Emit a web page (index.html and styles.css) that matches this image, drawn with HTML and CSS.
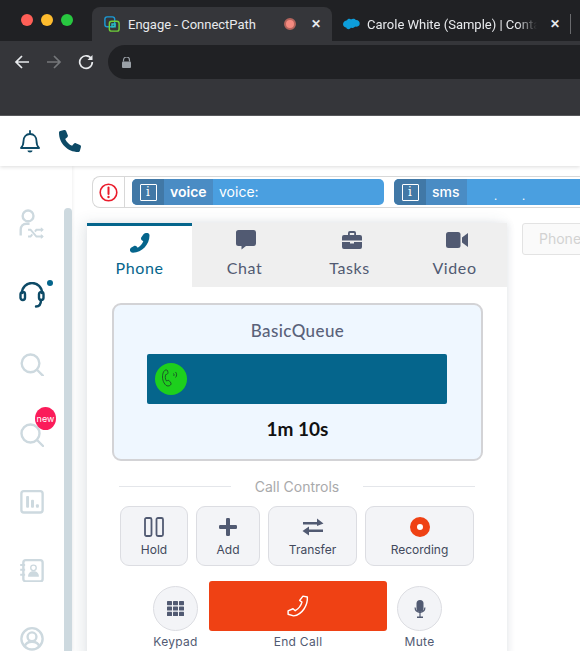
FILE: index.html
```html
<!DOCTYPE html>
<html lang="en">
<head>
    <meta charset="UTF-8">
    <meta name="viewport" content="width=device-width, initial-scale=1.0">
    <title>Engage - ConnectPath</title>
    <link rel="stylesheet" href="styles.css">
</head>
<body>
    <div class="chrome">
        <div class="tabstrip">
            <div class="lights">
                <span class="light red"></span>
                <span class="light yellow"></span>
                <span class="light green"></span>
            </div>
            <div class="tab active">
                <svg class="favicon" width="16" height="16" viewBox="0 0 18 18" fill="none" stroke-width="1.6">
                    <rect x="1" y="1" width="11" height="11" rx="2.5" stroke="#1b9ad6"/>
                    <rect x="6" y="6" width="11" height="11" rx="2.5" stroke="#6fd03a"/>
                    <path d="M9 13V9h3.500v3H9" stroke="#2cc0c0"/>
                </svg>
                <span class="tab-title">Engage - ConnectPath</span>
                <span class="audio-dot"></span>
                <span class="tab-close">&#10005;</span>
            </div>
            <div class="tab other">
                <svg class="favicon" width="17" height="12" viewBox="0 0 17 12">
                    <path d="M4 2.200C5 .6 7 .4 8 1.600 9.200 .2 12 .4 12.800 2 15.300 1.800 17 3.800 16.700 6 16.400 8.200 14 9.200 12.200 8.600 11 10.200 9 10.200 8 9.400 6.800 11.800 3.800 11.600 3.200 9.400 1.200 9.600 0 7.800 0 6 0 4.200 2 2.600 4 2.200Z" fill="#0d9dda"/>
                </svg>
                <span class="tab-title fade">Carole White (Sample) | Conta</span>
                <span class="tab-close">&#10005;</span>
            </div>
            <span class="tab-sep"></span>
        </div>
        <div class="toolbar">
            <svg width="16" height="16" viewBox="0 0 16 16" fill="none" stroke="#e8eaed" stroke-width="1.700">
                <path d="M15 8H2M8 2 2 8l6 6"/>
            </svg>
            <svg width="16" height="16" viewBox="0 0 16 16" fill="none" stroke="#75777a" stroke-width="1.700">
                <path d="M1 8h13M8 2l6 6-6 6"/>
            </svg>
            <svg width="16" height="16" viewBox="0 0 16 16" fill="none" stroke="#e8eaed" stroke-width="1.700">
                <path d="M13.500 5A6.300 6.300 0 1 0 14.300 8"/>
                <path d="M14.500 1v5h-5z" fill="#e8eaed" stroke="none"/>
            </svg>
            <div class="omnibox">
                <svg width="9" height="11" viewBox="0 0 9 11">
                    <path d="M1.500 4.500V3a3 3 0 0 1 6 0v1.500" fill="none" stroke="#9aa0a6" stroke-width="1.200"/>
                    <rect y="4.500" width="9" height="6.500" rx="1" fill="#9aa0a6"/>
                </svg>
            </div>
        </div>
    </div>

    <header class="topbar">
        <svg width="20" height="23" viewBox="0 0 20 23" fill="none" stroke="#0d4a66" stroke-width="1.800">
            <path d="M1 18c2-2 2.500-3.500 2.500-7 0-4 2.500-7 6.500-7s6.500 3 6.500 7c0 3.500.5 5 2.500 7z" stroke-linejoin="round"/>
            <path d="M10 1v3" stroke-linecap="round"/>
            <path d="M7.500 20.500h5c0 1.200-1 2-2.500 2s-2.500-.8-2.500-2z" fill="#0d4a66" stroke="none"/>
        </svg>
        <svg width="22" height="22" viewBox="0 0 512 512">
            <path d="M164.900 24.600c-7.700-18.600-28-28.500-47.400-23.200l-88 24C12.100 30.200 0 46 0 64c0 247.400 200.600 448 448 448 18 0 33.800-12.100 38.600-29.500l24-88c5.300-19.400-4.600-39.700-23.200-47.400l-96-40c-16.300-6.800-35.200-2.100-46.300 11.600L304.700 368c-70.400-33.300-127.400-90.300-160.700-160.700l49.300-40.300c13.700-11.200 18.400-30 11.600-46.300l-40-96z" fill="#0d4a66"/>
        </svg>
    </header>

    <div class="app">
        <nav class="rail">
            <div class="rail-icons">
                <svg class="rail-person" width="26" height="32" viewBox="0 0 26 32" fill="none" stroke="#cdd9df" stroke-width="2.400">
                    <circle cx="9" cy="7" r="5.500"/>
                    <path d="M1.500 27v-6c0-4 2.500-6 6-6h3"/>
                    <path d="M9 21h2.500l6 7H24M9 28h2.500l1.800-2.200M16 23l1.500-2H24" stroke-width="2"/>
                    <path d="M22 18.500l3 2.500-3 2.500zM22 25.500l3 2.500-3 2.500z" fill="#cdd9df" stroke="none"/>
                </svg>
                <div class="rail-slot">
                    <svg width="26" height="26" viewBox="0 0 26 26" fill="none" stroke="#0d4a66" stroke-width="2.400">
                        <path d="M3 11a10 10 0 0 1 20 0" stroke-linecap="round"/>
                        <rect x="1.500" y="10" width="4.500" height="8" rx="2.200"/>
                        <rect x="20" y="10" width="4.500" height="8" rx="2.200"/>
                        <path d="M22 18c0 4-1.500 6.500-5 6.500" stroke-linecap="round"/>
                    </svg>
                    <span class="online-dot"></span>
                </div>
                <svg width="24" height="24" viewBox="0 0 24 24" fill="none" stroke="#cdd9df" stroke-width="2.400">
                    <circle cx="10.500" cy="10.500" r="9"/>
                    <path d="M17 17l6 6" stroke-linecap="round"/>
                </svg>
                <div class="rail-slot rail-new">
                    <svg width="24" height="24" viewBox="0 0 24 24" fill="none" stroke="#cdd9df" stroke-width="2.400">
                        <circle cx="10.500" cy="10.500" r="9"/>
                        <path d="M17 17l6 6" stroke-linecap="round"/>
                    </svg>
                    <span class="new-badge">new</span>
                </div>
                <svg width="24" height="24" viewBox="0 0 24 24" fill="none">
                    <rect x="1.200" y="1.200" width="21.600" height="21.600" rx="2.500" stroke="#cdd9df" stroke-width="2.400"/>
                    <rect x="6" y="6" width="3" height="12" rx="1" fill="#cdd9df"/>
                    <rect x="11" y="10" width="3" height="8" rx="1" fill="#cdd9df"/>
                    <rect x="16" y="14.500" width="3" height="3.500" rx="1" fill="#cdd9df"/>
                </svg>
                <svg width="24" height="24" viewBox="0 0 24 24" fill="none">
                    <rect x="3.200" y="1.200" width="19.600" height="21.600" rx="2.500" stroke="#cdd9df" stroke-width="2.400"/>
                    <path d="M0 6h5M0 11h5M0 16h5" stroke="#cdd9df" stroke-width="2"/>
                    <circle cx="13.500" cy="9" r="2.800" stroke="#cdd9df" stroke-width="1.400"/>
                    <path d="M8 18c0-3.500 2-5.500 5.500-5.500S19 14.500 19 18z" fill="#cdd9df"/>
                </svg>
                <svg width="24" height="24" viewBox="0 0 24 24" fill="none" stroke="#cdd9df" stroke-width="2.400">
                    <circle cx="12" cy="12" r="10.800"/>
                    <circle cx="12" cy="10" r="4.500"/>
                    <path d="M4.500 20c1-3.500 4-5 7.500-5s6.500 1.500 7.500 5"/>
                </svg>
            </div>
            <span class="rail-scroll"></span>
        </nav>

        <main class="content">
            <div class="alerts">
                <div class="alert-icon">
                    <svg width="19" height="19" viewBox="0 0 19 19" fill="none">
                        <circle cx="9.500" cy="9.500" r="8.300" stroke="#ea1c2c" stroke-width="1.600"/>
                        <path d="M9.500 4.500v6.500" stroke="#ea1c2c" stroke-width="2" stroke-linecap="round"/>
                        <circle cx="9.500" cy="14" r="1.200" fill="#ea1c2c"/>
                    </svg>
                </div>
                <div class="queue-pill voice-pill">
                    <span class="pill-info"><span class="info-box">i</span></span>
                    <span class="pill-name">voice</span>
                    <span class="pill-text">voice:</span>
                </div>
                <div class="queue-pill sms-pill">
                    <span class="pill-info"><span class="info-box">i</span></span>
                    <span class="pill-name">sms</span>
                    <span class="pill-dots">.&nbsp;&nbsp;&nbsp;&nbsp;&nbsp;&nbsp;&nbsp;&nbsp;.</span>
                </div>
            </div>

            <div class="workspace">
                <section class="softphone">
                    <div class="channel-tabs">
                        <div class="channel selected">
                            <svg width="20" height="20" viewBox="0 0 20 20">
                                <path d="M17.500 0c1 .1 2 1 2 2.500C19.500 11.500 12 19.500 3 19.800c-1.500 0-2.500-.8-3-2-.3-1.200 0-2.200 1-3l3-1.800c1-.5 2-.3 2.700.5l1 1.300c2.500-1.300 4.500-3.800 5.600-6.500l-1.500-1c-.8-.7-1-1.700-.6-2.700L13.500 1.200C14.200.2 15.500-.2 17.500 0Z" fill="#05658c"/>
                            </svg>
                            <span>Phone</span>
                        </div>
                        <div class="channel icon-chat">
                            <svg width="20" height="20" viewBox="0 0 20 20">
                                <path d="M2.500 0h15A2.500 2.500 0 0 1 20 2.500v11a2.500 2.500 0 0 1-2.500 2.500H10l-4.500 3.500V16h-3A2.500 2.500 0 0 1 0 13.500v-11A2.500 2.500 0 0 1 2.500 0Z" fill="#515a72"/>
                            </svg>
                            <span>Chat</span>
                        </div>
                        <div class="channel icon-tasks">
                            <svg width="20" height="18" viewBox="0 0 20 18">
                                <path d="M6 4V2a2 2 0 0 1 2-2h4a2 2 0 0 1 2 2v2h-1.800V2H7.800v2z M2 4h16a2 2 0 0 1 2 2v3.500H0V6a2 2 0 0 1 2-2Z M0 11h8v1.500h4V11h8v5a2 2 0 0 1-2 2H2a2 2 0 0 1-2-2z" fill="#515a72"/>
                            </svg>
                            <span>Tasks</span>
                        </div>
                        <div class="channel icon-video">
                            <svg width="22" height="16" viewBox="0 0 22 16">
                                <rect width="14.500" height="16" rx="2.500" fill="#515a72"/>
                                <path d="M16 5.500 22 1v14l-6-4.500z" fill="#515a72"/>
                            </svg>
                            <span>Video</span>
                        </div>
                    </div>

                    <div class="phone-body">
                        <div class="queue-card">
                            <div class="queue-name">BasicQueue</div>
                            <div class="call-bar">
                                <span class="call-badge">
                                    <svg width="22" height="22" viewBox="0 0 22 22" fill="none" stroke="#1c3a2a" stroke-width=".8">
                                        <path d="M6 2C4 2 2.500 5 2.500 9C2.500 13 5 18 8 18C10 18 11.500 16.500 11 15L9 12.500C8 12 7 13 6.500 13C5 11 5 8 5.800 6.500C6.800 6.500 8 6 8 4.500L7.500 2.500C7.200 2 6.500 2 6 2Z"/>
                                        <path d="M13.500 5.500c.7.800.7 1.800 0 2.500M15.500 4c1.500 1.500 1.500 4 0 5.500"/>
                                    </svg>
                                </span>
                            </div>
                            <div class="call-time">1m 10s</div>
                        </div>

                        <div class="divider"><span>Call Controls</span></div>

                        <div class="controls">
                            <button class="ctl ctl-hold">
                                <svg width="20" height="20" viewBox="0 0 20 20" fill="none" stroke="#515a72" stroke-width="1.800">
                                    <rect x="1" y="1" width="6.500" height="18" rx="1.500"/>
                                    <rect x="12.500" y="1" width="6.500" height="18" rx="1.500"/>
                                </svg>
                                <span>Hold</span>
                            </button>
                            <button class="ctl ctl-add">
                                <svg width="20" height="20" viewBox="0 0 20 20" fill="#515a72">
                                    <rect x="8" y="1" width="4" height="18" rx="1.200"/>
                                    <rect x="1" y="8" width="18" height="4" rx="1.200"/>
                                </svg>
                                <span>Add</span>
                            </button>
                            <button class="ctl ctl-transfer">
                                <svg width="22" height="20" viewBox="0 0 22 20" fill="#515a72">
                                    <path d="M1 5h14V1.500L21.500 6.500 15 9V7.500H1z"/>
                                    <path d="M21 12.500H7V9.500L.5 14 7 18.500V15h14z"/>
                                </svg>
                                <span>Transfer</span>
                            </button>
                            <button class="ctl ctl-record">
                                <span class="rec-dot"></span>
                                <span>Recording</span>
                            </button>
                        </div>

                        <div class="call-actions">
                            <div class="action">
                                <span class="round-btn">
                                    <svg width="17" height="15" viewBox="0 0 17 15" fill="#515a72">
                                        <rect width="5" height="4.200" rx=".6"/><rect x="6" width="5" height="4.200" rx=".6"/><rect x="12" width="5" height="4.200" rx=".6"/>
                                        <rect y="5.400" width="5" height="4.200" rx=".6"/><rect x="6" y="5.400" width="5" height="4.200" rx=".6"/><rect x="12" y="5.400" width="5" height="4.200" rx=".6"/>
                                        <rect y="10.800" width="5" height="4.200" rx=".6"/><rect x="6" y="10.800" width="5" height="4.200" rx=".6"/><rect x="12" y="10.800" width="5" height="4.200" rx=".6"/>
                                    </svg>
                                </span>
                                <span class="action-label">Keypad</span>
                            </div>
                            <div class="action action-end">
                                <span class="end-btn">
                                    <svg width="22" height="22" viewBox="0 0 20 20" fill="none" stroke="#fff" stroke-width="1.300" stroke-linejoin="round">
                                        <path d="M14.500 1 18.500 1.800C19 9 14 18 6 19L1 17.500 1 14.500 5.500 12.500 7.500 14.300C10.500 12.500 12.800 9.500 13.600 6.500L11.500 5Z"/>
                                    </svg>
                                </span>
                                <span class="action-label">End Call</span>
                            </div>
                            <div class="action">
                                <span class="round-btn">
                                    <svg width="12" height="18" viewBox="0 0 12 18" fill="#515a72">
                                        <rect x="2.500" width="7" height="12" rx="3.500"/>
                                        <path d="M.5 7.500h1.200a4.300 4.300 0 0 0 8.600 0h1.200a5.500 5.500 0 0 1-4.900 5.400V16.500H9V18H3v-1.500h2.400V12.900A5.500 5.500 0 0 1 .5 7.500Z"/>
                                    </svg>
                                </span>
                                <span class="action-label">Mute</span>
                            </div>
                        </div>
                    </div>
                </section>
                <div class="side-input">Phone</div>
            </div>
        </main>
    </div>
</body>
</html>
```

FILE: styles.css
```css
html, body {
    margin: 0;
    padding: 0;
    height: 651px;
    overflow: hidden;
}
body {
    width: 580px;
    background: #fff;
    font-family: "Inter", "Liberation Sans", sans-serif;
}

/* browser frame */
.chrome {
    height: 115px;
    background: #35363a;
    border-bottom: 1px solid #5a5b5e;
}
.tabstrip {
    display: flex;
    height: 41px;
    background: #202124;
    padding-top: 7px;
    box-sizing: border-box;
    align-items: stretch;
}
.lights {
    width: 92px;
    display: flex;
    gap: 8px;
    padding: 7px 0 0 21px;
    box-sizing: border-box;
}
.light {
    width: 12px;
    height: 12px;
    border-radius: 50%;
}
.red { background: #ff5f57; }
.yellow { background: #febc2e; }
.green { background: #28c840; }
.tab {
    display: flex;
    align-items: center;
    font-family: "Roboto", "Liberation Sans", sans-serif;
    font-size: 13px;
    color: #e8eaed;
    white-space: nowrap;
}
.tab.active {
    width: 240px;
    background: #35363a;
    border-radius: 8px 8px 0 0;
    padding: 0 10px 0 12px;
    box-sizing: border-box;
}
.tab.other {
    width: 238px;
    padding: 0 0 0 11px;
    box-sizing: border-box;
}
.favicon { flex: none; margin-right: 8px; }
.tab.other .favicon { margin-right: 7px; }
.tab-title {
    flex: 1;
    overflow: hidden;
}
.fade {
    -webkit-mask-image: linear-gradient(to right, #000 150px, transparent 170px);
    mask-image: linear-gradient(to right, #000 150px, transparent 170px);
}
.audio-dot {
    width: 8px;
    height: 8px;
    border-radius: 50%;
    background: #f58a80;
    border: 2px solid #b4645c;
    margin-right: 14px;
}
.tab-close {
    font-size: 12px;
    font-weight: 700;
    width: 12px;
    text-align: center;
    color: #e8eaed;
}
.tab.other .tab-close { margin: 0 9px 0 3px; }
.tab-sep {
    width: 1px;
    height: 20px;
    margin-top: 7px;
    background: #6a6b6e;
}
.toolbar {
    display: flex;
    align-items: center;
    height: 34px;
    padding: 4px 0 0 14px;
    gap: 16px;
}
.omnibox {
    flex: 1;
    height: 34px;
    margin-left: -2px;
    background: #202124;
    border-radius: 17px 0 0 17px;
    display: flex;
    align-items: center;
    padding-left: 14px;
}

.topbar {
    height: 50px;
    background: #fff;
    display: flex;
    align-items: center;
    gap: 19px;
    padding: 0 0 0 20px;
    position: relative;
    z-index: 2;
    box-shadow: 0 1px 4px rgba(0, 0, 0, .14);
}

/* app */
.app {
    display: flex;
    height: 485px;
}
.rail {
    width: 72px;
    flex: none;
    display: flex;
    position: relative;
    box-shadow: 1px 0 3px rgba(0, 0, 0, .06);
}
.rail-icons {
    width: 64px;
    display: flex;
    flex-direction: column;
    align-items: center;
    padding-top: 43px;
    gap: 45px;
}
.rail-person { margin-bottom: -4px; }
.rail-slot {
    position: relative;
    display: flex;
}
.rail-new { margin: 2px 0 -2px; }
.online-dot {
    position: absolute;
    top: -2px;
    right: -8px;
    width: 6px;
    height: 6px;
    border-radius: 50%;
    background: #05658c;
}
.new-badge {
    position: absolute;
    top: -16px;
    left: 15px;
    width: 21px;
    height: 23px;
    border-radius: 50%;
    background: #fb1c5a;
    color: #fff;
    font-size: 9px;
    line-height: 23px;
    text-align: center;
}
.rail-scroll {
    width: 8px;
    height: 443px;
    margin-top: 42px;
    background: #cdd9df;
    border-radius: 4px 4px 0 0;
}
.content {
    flex: 1;
    min-width: 0;
    background: #fff;
    padding: 10px 0 0 20px;
    overflow: hidden;
}
.alerts {
    display: flex;
    align-items: center;
    height: 30px;
    width: 520px;
    border: 1px solid #d8d8d8;
    border-right: 0;
    border-radius: 8px 0 0 8px;
}
.alert-icon {
    width: 31px;
    height: 30px;
    flex: none;
    display: flex;
    align-items: center;
    justify-content: center;
    border-right: 1px solid #d8d8d8;
}
.queue-pill {
    display: flex;
    align-items: stretch;
    height: 26px;
    background: #4a9fe0;
    color: #fff;
    flex: none;
    overflow: hidden;
    border-radius: 5px 0 0 5px;
}
.voice-pill {
    width: 252px;
    margin-left: 7px;
    border-radius: 5px;
}
.sms-pill {
    flex: 1;
    margin-left: 10px;
}
.pill-info {
    width: 32px;
    display: flex;
    align-items: center;
    justify-content: center;
    background: #4178a6;
}
.info-box {
    width: 15px;
    height: 15px;
    border: 1px solid #fff;
    border-radius: 1px;
    font-family: "DejaVu Serif", "Liberation Serif", serif;
    font-size: 12px;
    line-height: 15px;
    text-align: center;
}
.pill-name {
    padding: 0 6px;
    background: #4a8cc4;
    font-size: 14px;
    font-weight: 600;
    line-height: 25px;
}
.voice-pill .pill-name { width: 37px; }
.sms-pill .pill-name { width: 29px; font-weight: 500; }
.pill-text {
    padding-left: 6px;
    font-size: 14px;
    line-height: 26px;
}
.pill-dots {
    padding-left: 27px;
    font-size: 11px;
    line-height: 34px;
    white-space: nowrap;
}

.workspace {
    display: flex;
    align-items: flex-start;
    margin: 15px 0 0 -5px;
}
.softphone {
    width: 420px;
    flex: none;
    box-shadow: -5px 0 14px rgba(60, 80, 100, .12), 2px 0 6px rgba(60, 80, 100, .08);
    height: 440px;
}
.channel-tabs {
    display: flex;
    height: 64px;
    background: #efefef;
}
.channel {
    width: 105px;
    display: flex;
    flex-direction: column;
    align-items: center;
    padding-top: 7px;
    box-sizing: border-box;
    color: #515a72;
    font-family: "Lato", "Inter", sans-serif;
    font-size: 16px;
}
.channel svg { height: 20px; }
.channel span { margin-top: 8px; letter-spacing: .6px; }
.channel.selected {
    background: #fff;
    border-top: 3px solid #05658c;
    color: #05658c;
}
.channel.selected span { margin-top: 5px; }
.icon-chat svg { margin-left: 2px; }
.icon-tasks svg { margin-left: 4px; }
.icon-video svg { margin-left: 5px; }
.phone-body {
    padding: 16px 25px 0;
    background: #fff;
}
.queue-card {
    width: 367px;
    height: 154px;
    background: #eff7ff;
    border: 2px solid #d3d3d6;
    border-radius: 9px;
    display: flex;
    flex-direction: column;
    align-items: center;
}
.queue-name {
    margin-top: 15px;
    color: #5a627a;
    font-family: "Lato", "Inter", sans-serif;
    font-size: 17px;
    font-weight: 500;
    letter-spacing: .4px;
}
.call-bar {
    width: 300px;
    height: 50px;
    margin: 13px 1px 0 0;
    background: #05658c;
    border-radius: 2px;
    display: flex;
    align-items: center;
    padding-left: 8px;
    box-sizing: border-box;
}
.call-badge {
    width: 32px;
    height: 32px;
    border-radius: 50%;
    background: #1dcf1d;
    display: flex;
    align-items: center;
    justify-content: center;
}
.call-time {
    margin-top: 13px;
    color: #111;
    font-family: "Lato", "Inter", sans-serif;
    font-size: 19px;
    font-weight: 700;
}
.divider {
    display: flex;
    align-items: center;
    gap: 24px;
    margin: 17px 7px 0;
    color: #a9a9ab;
    font-size: 14px;
    white-space: nowrap;
}
.divider::before, .divider::after {
    content: "";
    flex: 1;
    height: 1px;
    background: #e4e6ea;
}
.controls {
    display: flex;
    gap: 8px;
    margin: 11px 0 0 8px;
}
.ctl {
    height: 60px;
    background: #f3f4f7;
    border: 1px solid #dcdde2;
    border-radius: 9px;
    display: flex;
    flex-direction: column;
    align-items: center;
    justify-content: flex-end;
    gap: 5px;
    padding: 0 0 8px;
    color: #42495c;
    font-family: "Inter", sans-serif;
    font-size: 12px;
    box-sizing: border-box;
}
.ctl-hold { width: 68px; }
.ctl-add { width: 64px; }
.ctl-transfer { width: 89px; }
.ctl-record { width: 109px; }
.rec-dot {
    width: 20px;
    height: 20px;
    box-sizing: border-box;
    border-radius: 50%;
    border: 7px solid #ef4114;
    background: #fff;
}
.call-actions {
    display: flex;
    margin-top: 15px;
    padding-left: 41px;
    gap: 11px;
}
.action {
    width: 45px;
    display: flex;
    flex-direction: column;
    align-items: center;
    color: #515a72;
    font-family: "Inter", sans-serif;
    font-size: 12px;
}
.action:last-child { margin-left: -1px; }
.action-label { margin-top: 3px; letter-spacing: .3px; white-space: nowrap; }
.round-btn {
    flex: none;
    width: 45px;
    height: 45px;
    margin-top: 5px;
    box-sizing: border-box;
    border-radius: 50%;
    background: #f3f4f7;
    border: 1px solid #dcdde2;
    display: flex;
    align-items: center;
    justify-content: center;
}
.action-end { width: 178px; }
.end-btn {
    flex: none;
    width: 178px;
    height: 50px;
    border-radius: 3px;
    background: #ef4114;
    display: flex;
    align-items: center;
    justify-content: center;
}
.side-input {
    margin-left: 15px;
    width: 90px;
    height: 32px;
    line-height: 30px;
    padding-left: 16px;
    box-sizing: border-box;
    border: 1px solid #e3e3e3;
    border-radius: 3px;
    background: #fafafa;
    color: #d2d2d2;
    font-size: 14px;
    flex: none;
}
```
